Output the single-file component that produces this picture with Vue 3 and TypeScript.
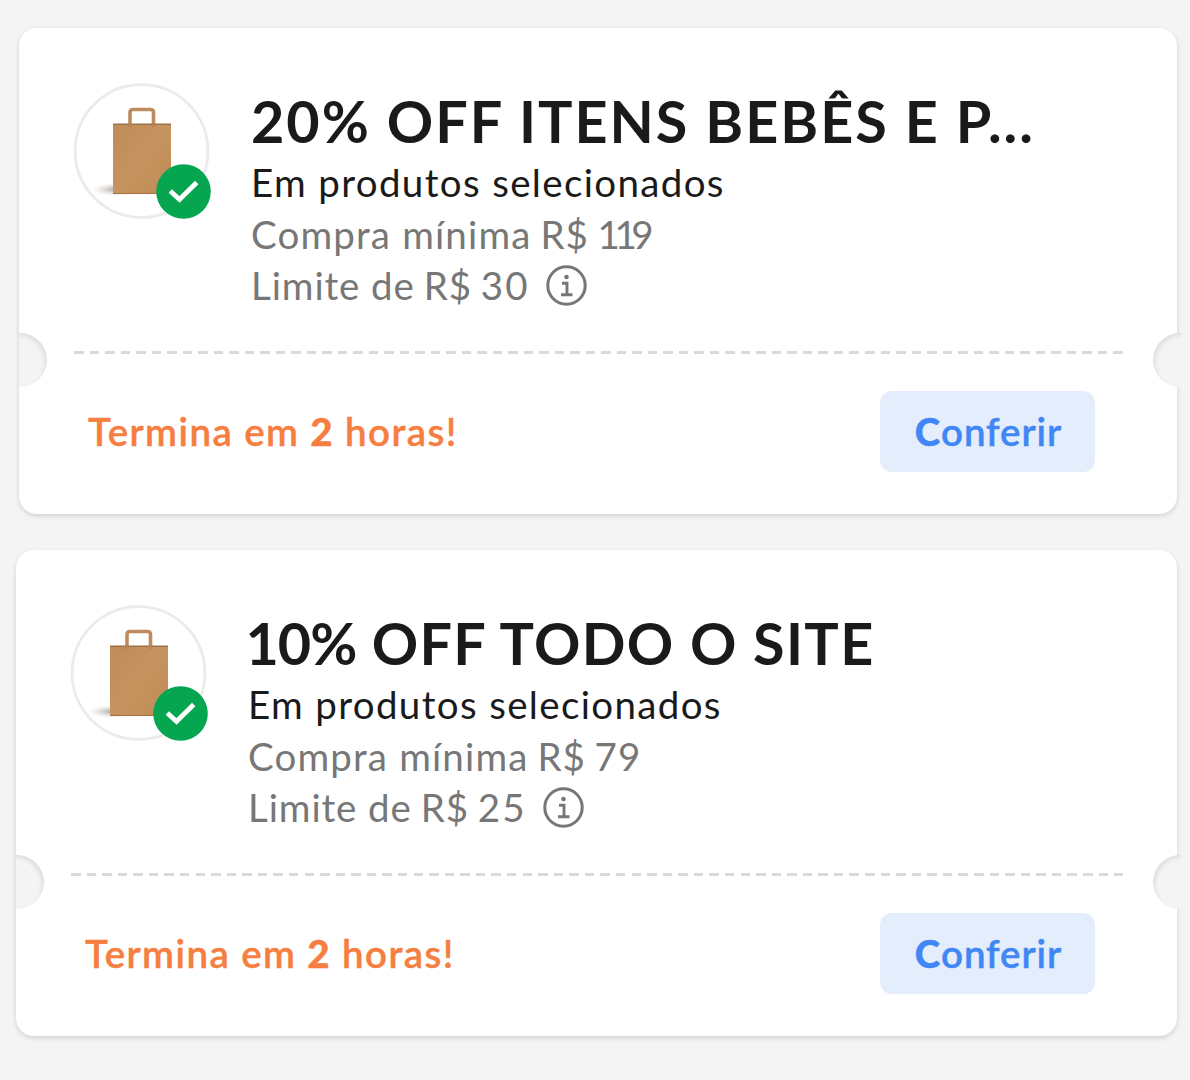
<script setup lang="ts">
interface Coupon {
  id: string
  title: string[]
  scope: string
  minimum: string
  amount: string
  limit: string
  cap: string
  expires: string
  hours: string
  unit: string
}

const coupons: Coupon[] = [
  {
    id: 'babies',
    title: ['20%', 'OFF ITENS BEBÊS E P...'],
    scope: 'Em produtos selecionados',
    minimum: 'Compra mínima',
    amount: '119',
    limit: 'Limite de',
    cap: '30',
    expires: 'Termina em',
    hours: '2',
    unit: 'horas!',
  },
  {
    id: 'site',
    title: ['10%', 'OFF TODO O SITE'],
    scope: 'Em produtos selecionados',
    minimum: 'Compra mínima',
    amount: '79',
    limit: 'Limite de',
    cap: '25',
    expires: 'Termina em',
    hours: '2',
    unit: 'horas!',
  },
]
</script>

<template>
  <main class="page">
    <article v-for="c in coupons" :key="c.id" class="coupon" :class="c.id">
      <span class="notch left"></span>
      <span class="notch right"></span>
      <section class="details">
        <div class="picture">
          <svg class="bag" viewBox="0 0 136 136" aria-hidden="true">
            <defs>
              <linearGradient :id="'paper-' + c.id" x1="0" y1="0" x2="1" y2="1">
                <stop offset="0" stop-color="#bf8c59" />
                <stop offset="0.5" stop-color="#c6945f" />
                <stop offset="1" stop-color="#c08a55" />
              </linearGradient>
              <radialGradient :id="'shade-' + c.id">
                <stop offset="0" stop-color="#8d8379" stop-opacity="0.75" />
                <stop offset="1" stop-color="#c9c4be" stop-opacity="0" />
              </radialGradient>
            </defs>
            <circle cx="67.500" cy="68" r="66.400" fill="#fff" stroke="#ebebeb" stroke-width="2.800" />
            <ellipse cx="42" cy="106.500" rx="24" ry="6.500" :fill="'url(#shade-' + c.id + ')'" />
            <path d="M56 42V29.500Q56 26.500 59 26.500H76.500Q79.500 26.500 79.500 29.500V42" fill="none" stroke="#bd8c5e" stroke-width="3.600" />
            <path d="M39 41H97V111H39Z" :fill="'url(#paper-' + c.id + ')'" />
            <path d="M39 41.300H97" stroke="#9e7148" stroke-width="1.500" />
            <path d="M39 110.500H97" stroke="#a8723d" stroke-width="1" />
            <path d="M54.200 41H57.800V44H54.200ZM77.700 41H81.300V44H77.700Z" fill="#b98555" />
          </svg>
          <svg class="badge" viewBox="0 0 55 55" aria-hidden="true">
            <circle cx="27.500" cy="27.500" r="27.300" fill="#06a650" />
            <path d="M14.300 27L23.500 35.500L40.700 18.500" fill="none" stroke="#fff" stroke-width="4.800" />
          </svg>
        </div>
        <div class="text">
          <h2 class="title"><span class="percent">{{ c.title[0] }}</span> {{ c.title[1] }}</h2>
          <p class="line scope">{{ c.scope }}</p>
          <p class="line muted">
            <span class="minimum">{{ c.minimum }}</span>
            <span>R$</span>
            <span class="amount">{{ c.amount }}</span>
          </p>
          <p class="line muted">
            <span class="limit">{{ c.limit }}</span>
            <span>R$</span>
            <span class="cap">{{ c.cap }}</span>
            <svg class="info" viewBox="0 0 41 41" aria-hidden="true">
              <circle cx="20.500" cy="20.500" r="18.700" fill="none" stroke="#777" stroke-width="3" />
              <circle cx="20.500" cy="12" r="2.300" fill="#777" />
              <path d="M16 18.300H21V29.700M15 29.700H26.500" fill="none" stroke="#777" stroke-width="2.900" />
            </svg>
          </p>
        </div>
      </section>
      <div class="divider"></div>
      <footer class="actions">
        <p class="expires">{{ c.expires }} <b>{{ c.hours }}</b> {{ c.unit }}</p>
        <button class="check" type="button"><b>C</b>onferir</button>
      </footer>
    </article>
  </main>
</template>

<style>
body {
  margin: 0;
  background: #f4f4f4;
}
</style>

<style scoped>
.page {
  box-sizing: border-box;
  height: 1080px;
  padding: 28px 12.600px 0 16px;
  display: flex;
  flex-direction: column;
  gap: 36.500px;
  overflow: hidden;
  background: #f4f4f4;
  font-family: Lato, 'Open Sans', sans-serif;
}
.coupon {
  position: relative;
  box-sizing: border-box;
  height: 485.500px;
  flex: none;
  padding: 55px 54.500px 0 55px;
  border-radius: 18px;
  background: #fff;
  box-shadow: 0 2px 5px rgba(0, 0, 0, 0.15);
}
.babies {
  margin-left: 3px;
}
.notch {
  position: absolute;
  top: 304.500px;
  width: 28px;
  height: 54.500px;
  box-sizing: border-box;
  background: #f4f4f4;
}
.left {
  left: -0.500px;
  border-radius: 0 28px 28px 0;
  box-shadow: inset -3px 3px 4px -1px rgba(0, 0, 0, 0.09);
}
.right {
  right: -4px;
  border-radius: 28px 0 0 28px;
  box-shadow: inset 3px 3px 4px -1px rgba(0, 0, 0, 0.09);
}
.details {
  display: flex;
  gap: 41px;
  height: 268px;
}
.picture {
  position: relative;
  width: 136px;
  height: 136px;
  flex: none;
}
.bag {
  display: block;
  width: 136px;
  height: 136px;
}
.badge {
  position: absolute;
  left: 81.500px;
  top: 81px;
  width: 55px;
  height: 55px;
}
.text {
  white-space: nowrap;
  color: #1a1a1a;
}
.title {
  margin: 0;
  padding-top: 1px;
  font-size: 57.500px;
  font-weight: 700;
  line-height: 73px;
  letter-spacing: 2px;
}
.site .title {
  letter-spacing: 1.350px;
}
.site .percent {
  margin-left: -2.500px;
  letter-spacing: -1px;
}
.line {
  margin: 0;
  display: flex;
  align-items: center;
  gap: 9px;
  font-size: 38.500px;
  line-height: 51.500px;
  letter-spacing: 0.800px;
}
.scope {
  letter-spacing: 1.350px;
}
.muted {
  color: #777;
}
.minimum {
  letter-spacing: 1.150px;
}
.limit {
  letter-spacing: 0.900px;
}
.site .amount {
  letter-spacing: 1px;
}
.babies .amount {
  letter-spacing: -5.500px;
}
.cap {
  letter-spacing: 2px;
}
.info {
  width: 41px;
  height: 41px;
  margin-left: 7px;
}
.divider {
  height: 3px;
  margin-right: -0.500px;
  background: repeating-linear-gradient(90deg, #d9d9d9 0 9.500px, transparent 9.500px 15.510px);
}
.site .divider {
  background: repeating-linear-gradient(90deg, #d9d9d9 0 9.500px, transparent 9.500px 15.570px);
}
.actions {
  display: flex;
  justify-content: space-between;
  padding: 36.500px 28px 0 14px;
}
.expires {
  margin: 0;
  line-height: 81px;
  font-size: 38.500px;
  font-weight: 600;
  letter-spacing: 1.400px;
  color: #f57e40;
  -webkit-text-stroke: 0.400px #f57e40;
}
.check {
  width: 215px;
  height: 81px;
  padding: 0 0 0 2px;
  border: 0;
  border-radius: 12px;
  background: #e3edfb;
  color: #4086f4;
  font: 600 38.500px/81px Lato, 'Open Sans', sans-serif;
  letter-spacing: 0.900px;
  -webkit-text-stroke: 0.400px #4086f4;
}
</style>
